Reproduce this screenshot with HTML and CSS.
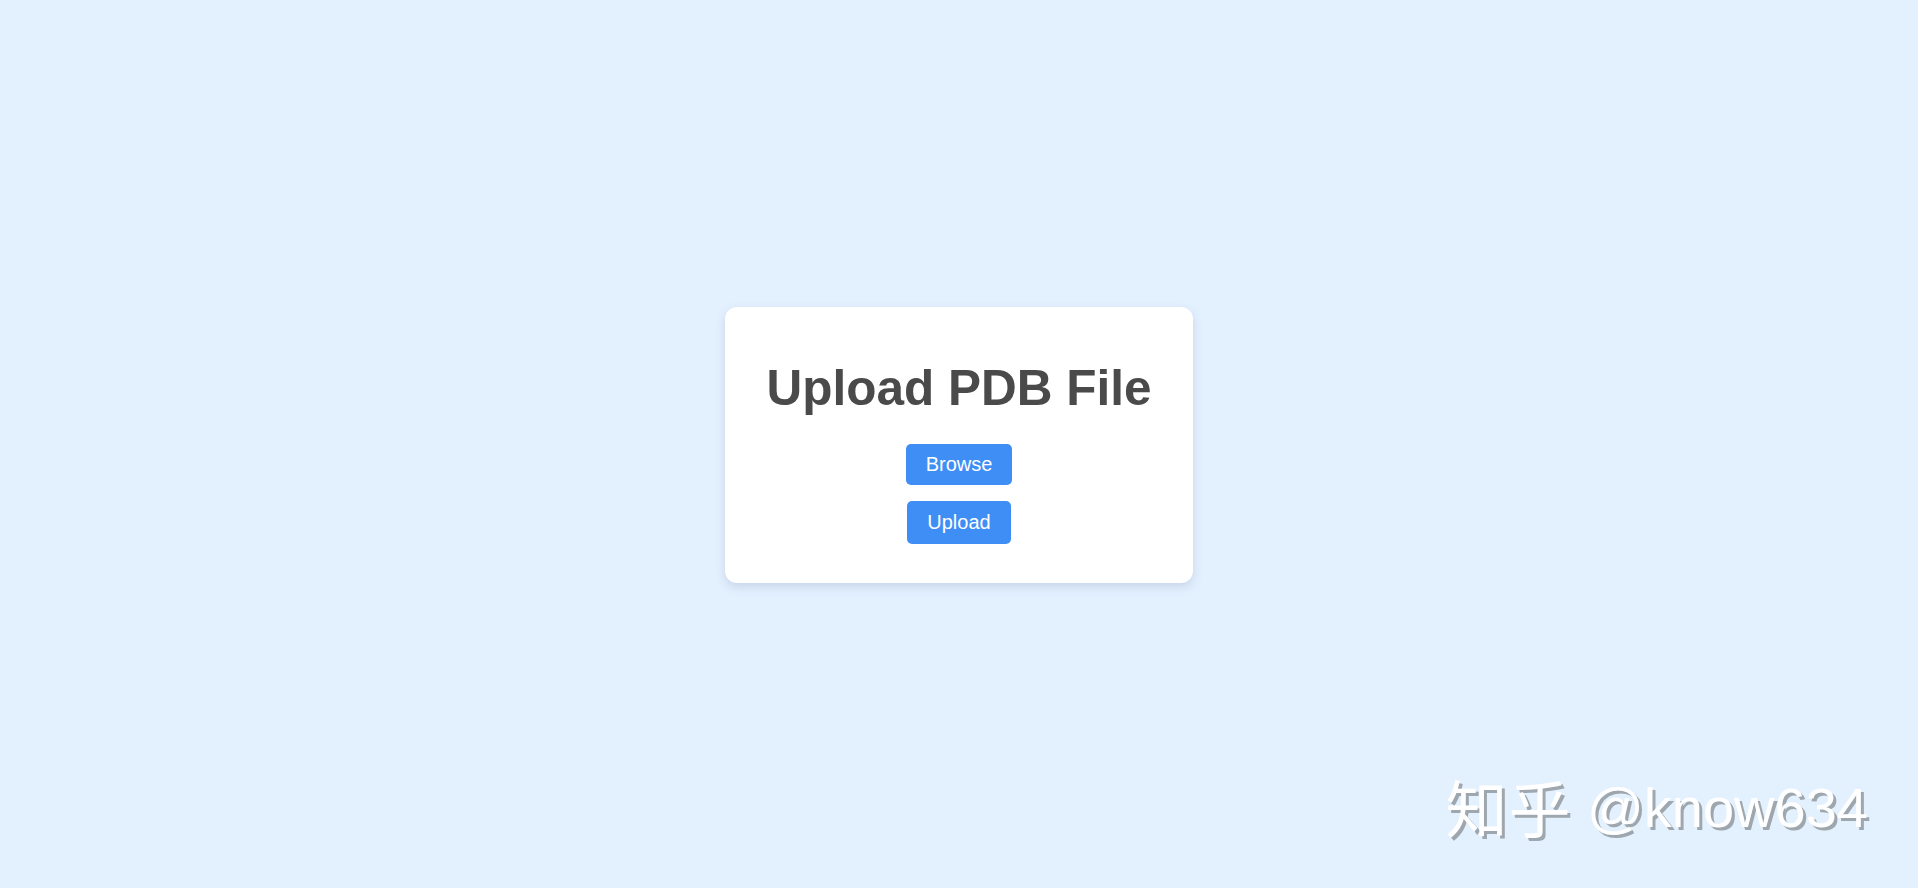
FILE: index.html
```html
<!DOCTYPE html>
<html lang="en">

<head>
  <meta charset="utf-8">
  <meta name="viewport" content="width=device-width, initial-scale=1.0">
  <title>Upload PDB File</title>
  <link rel="stylesheet" href="styles.css">
</head>

<body>
  <div class="page">
    <div class="upload-card">
      <h1>Upload PDB File</h1>
      <form id="upload-form" class="upload-form">
        <input type="file" id="pdb-file" name="pdb-file" accept=".pdb" hidden>
        <label for="pdb-file" class="btn">Browse</label>
        <button type="submit" class="btn">Upload</button>
      </form>
    </div>
  </div>

  <div class="watermark"><span class="watermark-site">知乎</span> @know634</div>
</body>

</html>
```

FILE: styles.css
```css
body,
html {
  margin: 0;
  padding: 0;
  height: 100%;
  font-family: "Liberation Sans", Arial, sans-serif;
  background-color: #e3f0fe;
  color: #4a4a4a;
}

.page {
  height: 100%;
  display: flex;
  align-items: center;
  justify-content: center;
}

.upload-card {
  width: 468px;
  box-sizing: border-box;
  padding: 42px 40px 39px;
  margin-top: 1px;
  background-color: #ffffff;
  border-radius: 12px;
  box-shadow: 0 4px 10px rgba(120, 140, 170, 0.25);
  text-align: center;
}

h1 {
  margin: 10px 0 28px;
  font-size: 49.5px;
  font-weight: bold;
  color: #4a4a4a;
}

.upload-form {
  display: flex;
  flex-direction: column;
  align-items: center;
  gap: 16px;
}

.btn {
  display: inline-block;
  padding: 9px 20px;
  background-color: #3f8ef5;
  color: #ffffff;
  border: none;
  border-radius: 5px;
  font-family: "Liberation Sans", Arial, sans-serif;
  font-size: 20px;
  line-height: 23px;
  cursor: pointer;
}

button.btn {
  padding: 10px 20px;
}

.watermark {
  position: absolute;
  right: 50px;
  bottom: 48px;
  font-family: "Liberation Sans", "Noto Sans CJK SC", sans-serif;
  font-size: 56px;
  line-height: 64px;
  color: #ffffff;
  text-shadow: 3px 3px 0 #9ea6ae;
  white-space: nowrap;
}

.watermark-site {
  vertical-align: -6px;
  font-family: "Noto Sans CJK SC", sans-serif;
  font-size: 62px;
  letter-spacing: 1px;
}
```
